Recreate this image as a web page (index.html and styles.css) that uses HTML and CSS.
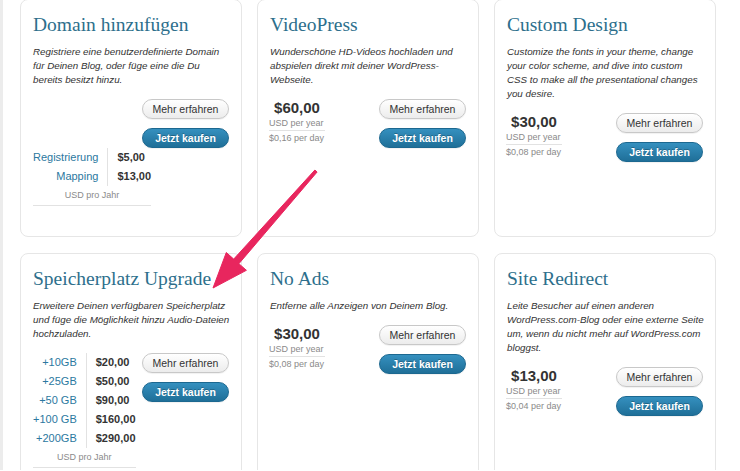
FILE: index.html
```html
<!DOCTYPE html>
<html>
<head>
    <title>Upgrades</title>
    <link rel="stylesheet" href="styles.css">
</head>
<body>
    <div class="page">
        <div class="grid">
            <div class="card">
                <h2>Domain hinzufügen</h2>
                <p class="desc">Registriere eine benutzerdefinierte Domain<br>für Deinen Blog, oder füge eine die Du<br>bereits besitzt hinzu.</p>
                <div class="actions right">
                    <button class="btn">Mehr erfahren</button>
                    <button class="btn primary">Jetzt kaufen</button>
                </div>
                <table class="prices">
                    <tr><td class="label">Registrierung</td><td class="amount">$5,00</td></tr>
                    <tr><td class="label">Mapping</td><td class="amount">$13,00</td></tr>
                    <tr><td class="foot" colspan="2">USD pro Jahr</td></tr>
                </table>
            </div>

            <div class="card">
                <h2>VideoPress</h2>
                <p class="desc">Wunderschöne HD-Videos hochladen und<br>abspielen direkt mit deiner WordPress-<br>Webseite.</p>
                <div class="buy">
                    <div class="price">
                        <div class="big">$60,00</div>
                        <div class="per year">USD per year</div>
                        <div class="per">$0,16 per day</div>
                    </div>
                    <div class="actions">
                        <button class="btn">Mehr erfahren</button>
                        <button class="btn primary">Jetzt kaufen</button>
                    </div>
                </div>
            </div>

            <div class="card">
                <h2>Custom Design</h2>
                <p class="desc">Customize the fonts in your theme, change<br>your color scheme, and dive into custom<br>CSS to make all the presentational changes<br>you desire.</p>
                <div class="buy">
                    <div class="price">
                        <div class="big">$30,00</div>
                        <div class="per year">USD per year</div>
                        <div class="per">$0,08 per day</div>
                    </div>
                    <div class="actions">
                        <button class="btn">Mehr erfahren</button>
                        <button class="btn primary">Jetzt kaufen</button>
                    </div>
                </div>
            </div>

            <div class="card">
                <h2>Speicherplatz Upgrade</h2>
                <p class="desc">Erweitere Deinen verfügbaren Speicherplatz<br>und füge die Möglichkeit hinzu Audio-Dateien<br>hochzuladen.</p>
                <div class="buy">
                    <table class="prices">
                        <tr><td class="label">+10GB</td><td class="amount">$20,00</td></tr>
                        <tr><td class="label">+25GB</td><td class="amount">$50,00</td></tr>
                        <tr><td class="label">+50 GB</td><td class="amount">$90,00</td></tr>
                        <tr><td class="label">+100 GB</td><td class="amount">$160,00</td></tr>
                        <tr><td class="label">+200GB</td><td class="amount">$290,00</td></tr>
                        <tr><td class="foot" colspan="2">USD pro Jahr</td></tr>
                    </table>
                    <div class="actions">
                        <button class="btn">Mehr erfahren</button>
                        <button class="btn primary">Jetzt kaufen</button>
                    </div>
                </div>
            </div>

            <div class="card">
                <h2>No Ads</h2>
                <p class="desc">Entferne alle Anzeigen von Deinem Blog.</p>
                <div class="buy">
                    <div class="price">
                        <div class="big">$30,00</div>
                        <div class="per year">USD per year</div>
                        <div class="per">$0,08 per day</div>
                    </div>
                    <div class="actions">
                        <button class="btn">Mehr erfahren</button>
                        <button class="btn primary">Jetzt kaufen</button>
                    </div>
                </div>
            </div>

            <div class="card">
                <h2>Site Redirect</h2>
                <p class="desc">Leite Besucher auf einen anderen<br>WordPress.com-Blog oder eine externe Seite<br>um, wenn du nicht mehr auf WordPress.com<br>bloggst.</p>
                <div class="buy">
                    <div class="price">
                        <div class="big">$13,00</div>
                        <div class="per year">USD per year</div>
                        <div class="per">$0,04 per day</div>
                    </div>
                    <div class="actions">
                        <button class="btn">Mehr erfahren</button>
                        <button class="btn primary">Jetzt kaufen</button>
                    </div>
                </div>
            </div>
        </div>

        <!-- annotation arrow -->
        <svg class="arrow" width="740" height="471" viewBox="0 0 740 471">
            <polygon points="317.1,173 238.9,264.7 246.4,271.3 213,289 226.3,253.5 233.7,260.1 314.9,171" fill="#e8265e" stroke="#e8265e" stroke-width="1" stroke-linejoin="round"/>
        </svg>
    </div>
</body>
</html>
```

FILE: styles.css
```css
html, body {
    margin: 0;
    padding: 0;
    background-color: #fff;
    overflow: hidden;
}
body {
    font-family: "Liberation Sans", Arial, sans-serif;
    color: #333;
}
.page {
    position: relative;
    height: 471px;
    border-left: 3px solid #ececec;
    padding-left: 17px;
    width: 696px;
}
.grid {
    display: grid;
    grid-template-columns: repeat(3, 1fr);
    column-gap: 15px;
    row-gap: 16px;
    margin-top: -1px;
}
.card {
    box-sizing: border-box;
    min-height: 238px;
    padding: 13px 11px 13px 12px;
    border: 1px solid #e6e6e6;
    border-radius: 8px;
    background-color: #fff;
}
.card h2 {
    margin: 0;
    font-family: "Liberation Serif", Georgia, serif;
    font-weight: normal;
    font-size: 19.5px;
    line-height: 24px;
    color: #2d6f8c;
}
.desc {
    margin: 8px 0 0 0;
    font-size: 9.8px;
    line-height: 14px;
    font-style: italic;
    white-space: nowrap;
    color: #333;
}
.buy {
    display: flex;
    justify-content: space-between;
    align-items: flex-start;
    margin-top: 12px;
}
.actions {
    display: flex;
    flex-direction: column;
    align-items: flex-end;
    gap: 9px;
    margin-right: 1px;
}
.actions.right {
    margin-top: 12px;
}
.btn {
    box-sizing: border-box;
    width: 87px;
    height: 20px;
    padding: 0;
    font-family: "Liberation Sans", Arial, sans-serif;
    font-size: 10.5px;
    color: #333;
    border: 1px solid #c8c8c8;
    border-radius: 10px;
    background: linear-gradient(#ffffff, #ececec);
    box-shadow: 0 1px 1px rgba(0,0,0,0.06);
}
.btn.primary {
    font-weight: bold;
    color: #fff;
    border-color: #1c6890;
    background: linear-gradient(#3590bf, #1f6f98);
    text-shadow: 0 -1px 0 rgba(0,0,0,0.25);
}
.price {
    width: 56px;
    margin-left: -1px;
    text-align: center;
}
.price .big {
    font-size: 15px;
    line-height: 17px;
    font-weight: bold;
    color: #333;
}
.price .per {
    font-size: 9px;
    line-height: 14px;
    color: #8a8a8a;
    text-align: left;
}
.price .year {
    border-bottom: 1px solid #e2e2e2;
}
.prices {
    border-collapse: collapse;
    font-size: 11px;
}
.prices td {
    padding: 0;
    height: 19px;
    line-height: 19px;
}
.prices .label {
    text-align: right;
    padding-right: 9px;
    border-right: 1px solid #e2e2e2;
    color: #2b78a0;
}
.prices .amount {
    padding-left: 9px;
    font-weight: bold;
    color: #333;
}
.prices .foot {
    text-align: center;
    font-size: 9px;
    color: #8a8a8a;
    border-bottom: 1px solid #e2e2e2;
}
.arrow {
    position: absolute;
    left: -3px;
    top: 0;
    pointer-events: none;
}
```
